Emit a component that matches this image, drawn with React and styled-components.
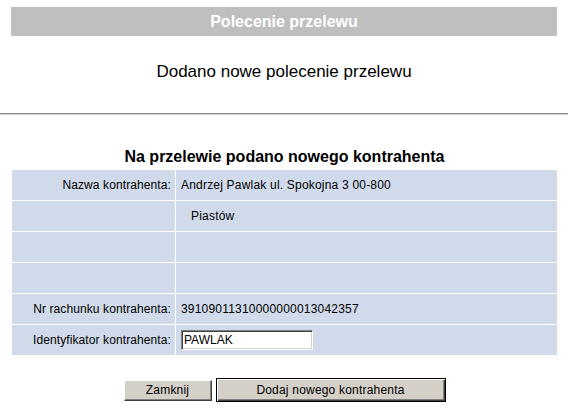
import styled, { createGlobalStyle } from 'styled-components'

const GlobalStyle = createGlobalStyle`
  html, body {
    margin: 0;
    padding: 0;
    background: #ffffff;
  }
  body {
    font-family: "Liberation Sans", Arial, sans-serif;
    color: #000000;
  }
`

const Top = styled.section`
  padding: 7px 11px 0 11px;
`

const TitleBar = styled.div`
  height: 29px;
  background-color: #bfbfbf;
  color: #ffffff;
  font-weight: bold;
  font-size: 16px;
  display: flex;
  align-items: center;
  justify-content: center;
`

const Notice = styled.h2`
  margin: 0;
  padding: 27px 0 32px 0;
  line-height: 18px;
  font-size: 17px;
  font-weight: normal;
  text-align: center;
`

const Divider = styled.hr`
  margin: 0;
  height: 0;
  border: none;
  border-top: 1px solid #8a8a8a;
  border-bottom: 1px solid #d6d6d6;
`

const Content = styled.section`
  padding: 0 11px 0 12px;
`

const Heading = styled.h3`
  margin: 0;
  padding: 33px 0 4px 0;
  line-height: 18px;
  font-size: 16px;
  font-weight: bold;
  text-align: center;
`

const Table = styled.div`
  display: grid;
  grid-template-columns: 163px 1fr;
  grid-auto-rows: 30px;
  gap: 1px;
  background-color: #ffffff;
`

const Label = styled.div`
  background-color: #d0daea;
  font-size: 12px;
  letter-spacing: 0.1px;
  display: flex;
  align-items: center;
  justify-content: flex-end;
  padding-right: 4px;
`

const Value = styled.div`
  background-color: #d0daea;
  font-size: 12px;
  letter-spacing: 0.2px;
  display: flex;
  align-items: center;
  padding-left: ${({ $indent }) => ($indent ? 15 : 5)}px;
`

const TextInput = styled.input`
  box-sizing: border-box;
  width: 132px;
  height: 20px;
  margin: 0;
  padding: 0 2px;
  font-family: "Liberation Sans", Arial, sans-serif;
  font-size: 12px;
  color: #000000;
  background: #ffffff;
  border: 1px solid;
  border-color: #808080 #ffffff #ffffff #808080;
  box-shadow: inset 1px 1px 0 #404040, inset -1px -1px 0 #d4d0c8;
  outline: none;
`

const Actions = styled.div`
  display: flex;
  justify-content: center;
  align-items: center;
  gap: 4px;
  margin-top: 23px;
`

const Button = styled.button`
  box-sizing: border-box;
  width: ${({ $w }) => $w}px;
  height: ${({ $primary }) => ($primary ? 24 : 21)}px;
  margin: 0;
  padding: 0;
  font-family: "Liberation Sans", Arial, sans-serif;
  font-size: 12px;
  letter-spacing: 0.2px;
  color: #000000;
  background-color: #d4d0c8;
  border: 1px solid;
  border-color: ${({ $primary }) =>
    $primary ? '#000000' : '#ffffff #404040 #404040 #ffffff'};
  box-shadow: ${({ $primary }) =>
    $primary
      ? 'inset 1px 1px 0 #ffffff, inset -1px -1px 0 #404040, inset -2px -2px 0 #808080'
      : 'inset -1px -1px 0 #808080'};
  outline: none;
  cursor: default;
`

const rows = [
  { label: 'Nazwa kontrahenta:', value: 'Andrzej Pawlak ul. Spokojna 3 00-800' },
  { label: '', value: 'Piastów', indent: true },
  { label: '', value: '' },
  { label: '', value: '' },
  { label: 'Nr rachunku kontrahenta:', value: '39109011310000000013042357' },
]

export default function App() {
  return (
    <>
      <GlobalStyle />
      <Top>
        <TitleBar>Polecenie przelewu</TitleBar>
        <Notice>Dodano nowe polecenie przelewu</Notice>
      </Top>
      <Divider />
      <Content>
        <Heading>Na przelewie podano nowego kontrahenta</Heading>
        <Table>
          {rows.flatMap((r, i) => [
            <Label key={'l' + i}>{r.label}</Label>,
            <Value key={'v' + i} $indent={r.indent}>{r.value}</Value>,
          ])}
          <Label>Identyfikator kontrahenta:</Label>
          <Value>
            <TextInput defaultValue="PAWLAK" />
          </Value>
        </Table>
        <Actions>
          <Button $w={88}>Zamknij</Button>
          <Button $w={230} $primary>Dodaj nowego kontrahenta</Button>
        </Actions>
      </Content>
    </>
  )
}
